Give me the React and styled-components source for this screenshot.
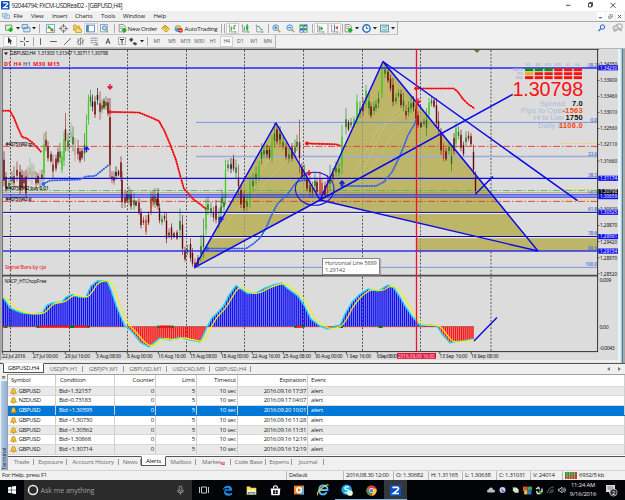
import React from "react";
import styled, { createGlobalStyle, css } from "styled-components";

const GlobalStyle = createGlobalStyle`
  * { box-sizing: border-box; }
  body { margin: 0; overflow: hidden; background: #f0f0f0; }
`;

const Window = styled.div`
  width: 625px;
  height: 500px;
  display: flex;
  flex-direction: column;
  background: #f0f0f0;
  color: #1c1c1c;
  font-family: "Open Sans", "Noto Sans", sans-serif;
  font-size: 6px;
  letter-spacing: -0.12px;
  white-space: nowrap;
  overflow: hidden;
`;

/* ---------- title and menu ---------- */
const TitleBar = styled.header`
  height: 11px;
  display: flex;
  align-items: center;
  background: #fff;
  padding-left: 1px;
`;
const Title = styled.span`
  flex: 1;
  padding-left: 2px;
  font-size: 6.2px;
  line-height: 10px;
  letter-spacing: -0.38px;
`;
const MenuBar = styled.nav`
  height: 11px;
  display: flex;
  align-items: center;
  padding-left: 2px;
  border-bottom: 1px solid #a9a9a9;
`;
const MenuItem = styled.span`
  width: ${(p) => p.$w}px;
`;
const Spacer = styled.span`
  flex: 1;
`;
const ChildButton = styled.span`
  width: 8px;
  height: 8px;
  margin-right: 1.5px;
  display: flex;
  align-items: center;
  justify-content: center;
  background: #fff;
`;

/* ---------- toolbars ---------- */
const ToolRow = styled.div`
  height: ${(p) => p.$h}px;
  display: flex;
  align-items: stretch;
`;
const ToolGroup = styled.div`
  display: flex;
  align-items: center;
  padding-left: 3px;
  border-right: 1px solid #b5b5b5;
  border-bottom: 1px solid #c4c4c4;
`;
const Slot = styled.span`
  width: ${(p) => p.$w}px;
  height: 11px;
  display: flex;
  align-items: center;
  justify-content: center;
  color: #555;
  font-size: 5.2px;
  letter-spacing: -0.2px;
  ${(p) =>
    p.$on &&
    css`
      background: #fafafa;
      border: 1px solid #d0d0d0;
    `}
`;
const ToolLabel = styled.span`
  width: ${(p) => p.$w}px;
  font-size: 6.1px;
  letter-spacing: -0.18px;
`;
const Sep = styled.i`
  width: 1px;
  height: 9px;
  margin: 0 ${(p) => p.$m || 1}px;
  background: #aaa;
`;

/* ---------- chart ---------- */
const ChartFrame = styled.main`
  position: relative;
  height: 315px;
`;
const ChartSvg = styled.svg`
  display: block;
`;
const Tooltip = styled.div`
  position: absolute;
  left: 322px;
  top: 210px;
  width: 58px;
  height: 17px;
  padding: 1px 2px;
  border: 1px solid #858585;
  background: #fff;
  box-shadow: 1px 1px 1px #8888;
  color: #555;
  font-size: 5.8px;
  line-height: 7px;
  letter-spacing: -0.2px;
`;

/* ---------- tabs ---------- */
const TabStrip = styled.div`
  height: ${(p) => p.$h}px;
  display: flex;
  align-items: flex-start;
  padding-left: ${(p) => p.$pad}px;
  border-top: 1px solid #555;
  color: #6c6c6c;
`;
const Tab = styled.span`
  width: ${(p) => p.$w}px;
  height: ${(p) => p.$h || 10}px;
  display: flex;
  align-items: center;
  justify-content: center;
  font-size: 6px;
  letter-spacing: ${(p) => p.$ls || -0.18}px;
  ${(p) =>
    p.$active
      ? css`
          margin-top: -1px;
          background: #fff;
          color: #111;
          border: 1px solid #555;
          border-top-color: #fff;
        `
      : css`
          background: linear-gradient(#999, #999) right center / 1px 6px no-repeat;
        `}
`;
const Badge = styled.sub`
  color: #f0202c;
  font-size: 4px;
  font-weight: 700;
  line-height: 1;
  margin-top: 4px;
`;
const Pager = styled.span`
  width: 22px;
  height: 9px;
  display: flex;
  align-items: center;
  justify-content: space-around;
`;

/* ---------- terminal ---------- */
const Terminal = styled.section`
  height: 96px;
  display: flex;
`;
const Rail = styled.div`
  width: 7px;
  display: flex;
  flex-direction: column;
  align-items: center;
`;
const RailClose = styled.span`
  height: 7px;
  font: 8px/6px "Open Sans", sans-serif;
`;
const RailTitle = styled.span`
  flex: 1;
  width: 6px;
  background: linear-gradient(90deg, #8fb0d6, #b9cfe8);
  writing-mode: vertical-rl;
  transform: rotate(180deg);
  line-height: 6px;
  font-size: 6px;
  letter-spacing: -0.3px;
`;
const TerminalBody = styled.div`
  flex: 1;
  display: flex;
  flex-direction: column;
  border-left: 1px solid #a0a0a0;
`;
const Table = styled.div`
  height: 82px;
  border-top: 1px solid #a0a0a0;
  background: #fff;
`;
const Row = styled.div`
  display: grid;
  grid-template-columns: 48px 59px 41px 41px 41px 70px 1fr;
  height: ${(p) => (p.$head ? 11.6 : 9.75)}px;
  line-height: ${(p) => (p.$head ? 11 : 9)}px;
  background: ${(p) => (p.$sel ? "#0078d7" : p.$even ? "#e9e9e9" : "#fff")};
  color: ${(p) => (p.$sel ? "#fff" : "#1c1c1c")};
  border-bottom: 1px solid ${(p) => (p.$sel ? "#0078d7" : "#d8d8d8")};
`;
const Cell = styled.span`
  display: flex;
  align-items: center;
  gap: 2px;
  justify-content: ${(p) => (p.$right ? "flex-end" : "flex-start")};
  padding: 0 ${(p) => (p.$right ? 1 : 0)}px 0 ${(p) => p.$pl || 3}px;
  border-right: 1px solid #cfcfcf;
  font-size: 6px;
  letter-spacing: ${(p) => p.$ls || -0.18}px;
`;

/* ---------- status and taskbar ---------- */
const StatusBar = styled.div`
  height: 10px;
  display: flex;
  align-items: center;
  padding-left: 0;
  border-top: 1px solid #d4d4d4;
`;
const Status = styled.span`
  width: ${(p) => p.$w}px;
  height: 9px;
  line-height: 9px;
  display: flex;
  align-items: center;
  gap: 2px;
  padding-left: 2px;
  font-size: 5.9px;
  letter-spacing: -0.24px;
  border-left: ${(p) => (p.$first ? 0 : 1)}px solid #b8b8b8;
`;
const Taskbar = styled.footer`
  height: 20px;
  display: flex;
  align-items: center;
  background: #020407;
  color: #eee;
`;
const Task = styled.span`
  width: ${(p) => p.$w}px;
  height: 20px;
  display: flex;
  align-items: center;
  justify-content: center;
  background: ${(p) => (p.$active ? "#34373b" : "transparent")};
  box-shadow: ${(p) => (p.$open ? "inset 0 -1px #76b9ed" : "none")};
`;
const Search = styled.span`
  width: 168px;
  height: 20px;
  display: flex;
  align-items: center;
  gap: 2px;
  padding: 0 7px 0 3px;
  background: #2b2b2c;
  color: #a0a0a0;
  font-size: 7.1px;
  letter-spacing: -0.05px;
`;
const Clock = styled.span`
  width: 30px;
  text-align: center;
  font-size: 5.8px;
  line-height: 8.6px;
`;

const Svg = ({ w = 9, h = 9, box = "0 0 16 16", children }) => (
  <svg width={w} height={h} viewBox={box} fill="none" strokeWidth="1.6">
    {children}
  </svg>
);
const Drop = () => (
  <svg width="4" height="3" viewBox="0 0 4 3">
    <path d="M0 0h4L2 2.5z" fill="#222" />
  </svg>
);
const ZLogo = ({ s = 9 }) => (
  <Svg w={s} h={s}>
    <rect width="16" height="16" rx="1" fill="#0c4ec4" />
    <path d="M3.5 3.5h7.5q3 1.5 0 4L5 12.3h8" stroke="#fff" strokeWidth="2.4" />
  </Svg>
);
const Plus = ({ x = 11, y = 11 }) => (
  <path d={`M${x - 4} ${y}h8M${x} ${y - 4}v8`} stroke="#14b414" strokeWidth="3.4" />
);
const Sheet = ({ color = "#888" }) => <path d="M2 1h8l3 3v10H2z" fill="#f7f7f7" stroke={color} />;
const BarsAxis = () => <path d="M3 1v13h12M1 3h2M13 13v3" stroke="#777" strokeWidth="1.2" />;

const icons = {
  newChart: (
    <Svg w={11}>
      <path d="M1 2h11v9H1z" fill="#e7f2e7" stroke="#4b9560" />
      <Plus x={10} y={10} />
    </Svg>
  ),
  profiles: (
    <Svg w={10}>
      <path d="M1 1h10v7H1zM4 6h11v8H4z" fill="#d5e8fa" stroke="#6794ba" />
    </Svg>
  ),
  market: (
    <Svg>
      <rect x="1" y="1" width="14" height="14" fill="#fff" stroke="#73a3c3" />
      <path d="M3 5h4v3H3z" fill="#28ae3a" />
      <path d="M8 8h5v5H8z" fill="#e35a35" />
      <path d="M4 3l9 10" stroke="#28ae3a" strokeWidth="2" />
    </Svg>
  ),
  target: (
    <Svg>
      <circle cx="8" cy="8" r="5" stroke="#777" />
      <path d="M8 0v6M8 10v6M0 8h6M10 8h6" stroke="#666" />
    </Svg>
  ),
  folders: (
    <Svg>
      <path d="M1 2h5l1 2h5v7H1z" fill="#f5d262" stroke="#c69c2c" />
      <path d="M5 7h4l1 2h5v6H5z" fill="#ffe27a" stroke="#c69c2c" />
    </Svg>
  ),
  nav: (
    <Svg>
      <rect x="1" y="2" width="14" height="12" fill="#fff" stroke="#4d86bb" />
      <path d="M1 2h4v12H1z" fill="#4d86bb" />
    </Svg>
  ),
  tester: (
    <Svg>
      <rect x="1" y="1" width="12" height="13" fill="#e6eff7" stroke="#7ba2c6" />
      <circle cx="8" cy="7" r="3.5" fill="#c3ddf4" stroke="#4b7fae" />
      <path d="M10 10l4 5" stroke="#c09b35" strokeWidth="2" />
    </Svg>
  ),
  order: (
    <Svg>
      <Sheet />
      <path d="M4 5h6M4 8h5" stroke="#999" />
      <Plus />
    </Svg>
  ),
  gold: (
    <Svg>
      <path d="M1 8l6-6 8 7-6 5z" fill="#f0b929" stroke="#b88515" />
      <path d="M2 8l6 4 6-3" stroke="#fff0a6" />
    </Svg>
  ),
  auto: (
    <Svg>
      <circle cx="7" cy="8" r="6" fill="#4aa0d5" />
      <path d="M1 7q6-9 12 0z" fill="#f1c544" />
      <circle cx="11.5" cy="11.5" r="4.2" fill="#dd2b20" />
      <path d="M10 11.5h3" stroke="#fff" />
    </Svg>
  ),
  bars: (
    <Svg>
      <BarsAxis />
      <path d="M6 5v7M6 6h2M11 2v8M9 8h2M11 3h3" stroke="#23a632" />
    </Svg>
  ),
  candle: (
    <Svg>
      <BarsAxis />
      <path d="M6 5v7M11 0v13" stroke="#23a632" />
      <path d="M9 3h4v7H9z" fill="#17bd2d" />
    </Svg>
  ),
  line: (
    <Svg>
      <BarsAxis />
      <path d="M4 5q4-3 5 2t5 3" stroke="#23a632" />
    </Svg>
  ),
  zoomIn: (
    <Svg>
      <circle cx="6.5" cy="6.5" r="5" fill="#d8ecff" stroke="#3d83c4" />
      <path d="M4 6.5h5M6.5 4v5" stroke="#2472bc" />
      <path d="M10.5 10.5l4 4" stroke="#d3a52e" strokeWidth="3" />
    </Svg>
  ),
  zoomOut: (
    <Svg>
      <circle cx="6.5" cy="6.5" r="5" fill="#d8ecff" stroke="#3d83c4" />
      <path d="M4 6.5h5" stroke="#2472bc" />
      <path d="M10.5 10.5l4 4" stroke="#d3a52e" strokeWidth="3" />
    </Svg>
  ),
  tile: (
    <Svg>
      <path d="M1 1h7v7H1zM8 8h7v7H8z" fill="#2fa63b" />
      <path d="M8 1h7v7H8zM1 8h7v7H1z" fill="#2e67ba" />
      <path d="M2.5 4h4v3h-4zM9.5 4h4v3h-4zM2.5 11h4v3h-4zM9.5 11h4v3h-4z" fill="#e4f1f7" />
    </Svg>
  ),
  scroll: (
    <Svg>
      <BarsAxis />
      <path d="M6 4v8" stroke="#777" />
      <path d="M8 4l5 4-5 4z" fill="#1ea430" />
    </Svg>
  ),
  shift: (
    <Svg>
      <BarsAxis />
      <path d="M8 1v12" stroke="#4674b5" />
      <path d="M14 3v7L9 6.5z" fill="#c44b32" />
    </Svg>
  ),
  clock: (
    <Svg>
      <circle cx="8" cy="8" r="6.5" fill="#f6fbff" stroke="#1d6fcb" strokeWidth="2.6" />
      <path d="M8 4v4h3" stroke="#555" />
    </Svg>
  ),
  template: (
    <Svg>
      <rect x="1" y="2" width="14" height="12" fill="#e1effb" stroke="#4d86bb" />
      <path d="M3 7l3-2 3 1 4-2M3 11l3-1 3 1 4-2" stroke="#45a35f" />
    </Svg>
  ),
  search: (
    <Svg w={8} h={8}>
      <circle cx="9" cy="6" r="4.4" fill="#dcecff" stroke="#2b69cf" strokeWidth="2" />
      <path d="M5.5 9.5L1 14" stroke="#2b69cf" strokeWidth="2.6" />
    </Svg>
  ),
  chat: (
    <Svg w={11}>
      <ellipse cx="11" cy="6" rx="6" ry="4.5" fill="#eee" stroke="#999" />
      <ellipse cx="5" cy="9" rx="5" ry="4" fill="#ddd" stroke="#999" />
      <path d="M13 10l2 4-5-3M3 12l-1 3 4-2" fill="#ddd" stroke="#999" />
    </Svg>
  ),
  cursor: (
    <Svg w={8} h={8}>
      <path d="M4 0v13l3-3 2 5 2-1-2-5h4z" fill="#333" />
    </Svg>
  ),
  cross: (
    <Svg>
      <path d="M8 0v6M8 10v6M0 8h6M10 8h6" stroke="#555" />
    </Svg>
  ),
  vline: <Svg><path d="M8 2v12" stroke="#555" /></Svg>,
  hline: <Svg><path d="M2 8h12" stroke="#555" /></Svg>,
  trend: <Svg><path d="M2 14L14 2" stroke="#555" /></Svg>,
  channel: (
    <Svg>
      <path d="M1 10L11 1M5 14L15 5M4 2v12M8 1v14M12 3v11" stroke="#666" strokeWidth="1.2" />
    </Svg>
  ),
  fib: (
    <Svg>
      <path d="M1 2h13M1 6h13M1 10h13M7 14h8" stroke="#777" strokeDasharray="2 .6" />
      <path d="M12 11v4" stroke="#777" />
    </Svg>
  ),
  textA: <Svg w={8} h={8}><path d="M4 14L8 3l4 11M5 10h6" stroke="#333" /></Svg>,
  textT: (
    <Svg w={8} h={8}>
      <rect x="1" y="1" width="14" height="14" stroke="#777" strokeDasharray="2 1" />
      <path d="M4 5h8M8 5v8" stroke="#333" strokeWidth="2" />
    </Svg>
  ),
  arrows: <Svg><path d="M0 5l4-4 4 4-4 4zM6 11l4-2 5 3-4 3z" fill="#444" /></Svg>,
};

const T1 = [
  ["newChart", 12], ["drop", 5], ["gap", 1], ["profiles", 10], ["drop", 5], ["sep", 7.5],
  ["market", 13], ["target", 14], ["folders", 13], ["nav", 14, 1], ["tester", 14], ["sep", 5],
  ["order", 11], ["New Order", 31], ["gold", 13], ["auto", 13], ["AutoTrading", 35], ["sep", 3], ["sep", 3],
  ["bars", 13, 1], ["candle", 14], ["line", 14], ["sep", 3], ["zoomIn", 14], ["zoomOut", 13], ["tile", 14],
  ["sep", 3], ["scroll", 14, 1], ["shift", 13, 1], ["sep", 3], ["order", 10], ["drop", 7],
  ["clock", 11], ["drop", 7], ["template", 11], ["drop", 7],
];
const T2 = [
  ["cursor", 14, 1], ["cross", 15], ["sep", 3], ["vline", 11], ["hline", 14], ["trend", 14], ["channel", 13],
  ["fib", 14], ["textA", 14], ["textT", 13], ["arrows", 11], ["drop", 6], ["sep", 4],
  ["M1", 16], ["M5", 13.7], ["M15", 13.7], ["M30", 13.7], ["H1", 13.7], ["H4", 13.7, 1], ["D1", 13.7],
  ["W1", 13.7], ["MN", 13.7],
];

function Tools({ items }) {
  return items.map(([k, w, on], i) => {
    if (k === "sep") return <Sep key={i} $m={(w - 1) / 2} />;
    if (k === "New Order" || k === "AutoTrading") return <ToolLabel key={i} $w={w}>{k}</ToolLabel>;
    return (
      <Slot key={i} $w={w} $on={on}>
        {k === "drop" ? <Drop /> : k === "gap" ? null : icons[k] || k}
      </Slot>
    );
  });
}

/* Bars: x, high, low (in thirds of a pixel below `base`), tone. */
const UPPER = [
  [4, 310, 415, "m"], [6, 372, 432, "m"], [9, 390, 425, "g"], [12, 370, 410, "g"], [14, 355, 425, "r"],
  [17, 340, 400, "r"], [20, 350, 440, "m"], [22, 365, 430, "m"], [24, 370, 420, "r"], [26, 365, 450, "m"],
  [28, 355, 400, "p"], [30, 330, 400, "q"], [32, 345, 410, "p"], [34, 350, 395, "q"], [36, 370, 420, "r"],
  [38, 375, 410, "m"], [40, 365, 440, "q"], [42, 365, 400, "r"], [44, 255, 400, "l"], [46, 250, 310, "r"],
  [48, 280, 340, "m"], [51, 310, 345, "m"], [53, 320, 390, "r"], [56, 320, 370, "m"], [58, 300, 350, "m"],
  [60, 285, 345, "g"], [62, 310, 375, "l"], [64, 250, 355, "l"], [65.5, 195, 310, "r"], [68, 255, 310, "g"],
  [71, 225, 285, "q"], [73, 235, 310, "g"], [75, 270, 340, "p"], [78, 275, 335, "r"], [80, 300, 345, "m"],
  [82, 300, 335, "m"], [84.5, 255, 340, "g"], [86.5, 200, 315, "l"], [88.5, 140, 230, "l"], [90.5, 125, 175, "g"],
  [92.5, 140, 190, "b"], [95, 145, 210, "m"], [97.5, 120, 170, "b"], [100, 130, 215, "r"], [102, 155, 195, "g"],
  [104, 150, 185, "m"], [106, 145, 185, "g"], [108, 150, 205, "m"], [110, 150, 390, "m"], [112, 370, 405, "r"],
  [114, 370, 410, "r"], [116, 355, 395, "b"], [118.5, 365, 385, "m"], [121, 325, 400, "m"], [122, 370, 480, "m"],
  [125, 425, 480, "r"], [127, 430, 465, "m"], [129, 415, 470, "g"], [131, 425, 485, "m"], [134, 435, 485, "g"],
  [151, 430, 480, "g"], [153, 425, 475, "r"], [155, 420, 480, "g"], [158, 420, 485, "m"],
  [222, 425, 480, "g"], [225.5, 335, 470, "l"], [228, 335, 370, "g"], [231, 330, 375, "b"], [233.5, 320, 370, "m"],
  [236, 335, 390, "g"], [238.5, 350, 440, "r"], [241, 410, 480, "m"], [244, 430, 490, "m"], [247, 440, 490, "g"],
  [250, 385, 480, "l"], [253, 375, 430, "g"], [256, 355, 410, "g"], [259, 340, 400, "l"], [261.5, 285, 350, "g"],
  [264, 290, 330, "g"], [267, 290, 330, "b"], [269.5, 295, 335, "m"], [272, 260, 345, "l"], [274.5, 225, 300, "g"],
  [277, 230, 290, "m"], [280, 235, 290, "b"], [283, 265, 305, "g"], [286, 285, 335, "m"], [289, 300, 345, "g"],
  [292, 285, 340, "m"], [295, 275, 330, "g"], [297, 260, 310, "g"], [299.5, 215, 375, "r"], [302, 345, 395, "m"],
  [304.5, 350, 400, "g"], [307, 380, 430, "m"], [310, 385, 450, "r"], [312.5, 400, 450, "g"], [315, 375, 430, "g"],
  [317, 390, 440, "m"], [320, 370, 455, "R"], [322, 390, 450, "R"], [325, 400, 450, "m"], [327.5, 380, 445, "R"],
  [330, 350, 430, "g"], [333, 360, 400, "r"], [336, 340, 385, "g"], [339, 345, 385, "g"], [342, 230, 380, "l"],
  [346, 180, 260, "g"], [348.5, 215, 250, "m"], [351, 210, 240, "g"], [354, 205, 240, "l"], [357, 140, 230, "l"],
  [360, 160, 210, "g"], [363, 150, 205, "r"], [366, 110, 180, "l"], [369, 130, 200, "g"], [371, 165, 210, "m"],
  [374, 160, 200, "g"], [376, 155, 190, "g"], [378.5, 130, 180, "g"], [382, 50, 150, "l"], [385, 45, 90, "g"],
  [388, 60, 105, "m"], [390.5, 80, 130, "m"], [393, 90, 175, "m"], [396, 135, 170, "g"], [398.5, 125, 150, "g"],
  [401, 125, 180, "m"], [403.5, 135, 190, "g"], [406, 170, 215, "r"], [408.5, 160, 205, "g"], [411, 145, 195, "g"],
  [413.5, 145, 190, "b"], [416, 170, 220, "m"], [418, 190, 240, "m"], [421, 220, 240, "m"], [424, 210, 235, "g"],
  [426.5, 180, 265, "g"], [429, 150, 210, "l"], [431.5, 145, 175, "g"], [434, 150, 180, "m"], [436.5, 150, 240, "m"],
  [438.5, 190, 260, "r"], [441, 240, 320, "m"], [443.5, 285, 340, "R"], [446, 300, 340, "m"], [449, 280, 320, "g"],
  [451.5, 290, 370, "g"], [454, 255, 320, "m"], [456, 220, 300, "l"], [458.5, 235, 275, "g"], [461, 245, 310, "m"],
  [463.5, 280, 325, "m"], [466, 250, 295, "g"], [468.5, 250, 280, "r"], [471, 255, 295, "m"], [473.5, 290, 380, "m"],
  [475.5, 370, 440, "m"],
];
const LOWER = [
  [136, 15, 35, "m"], [139, 10, 60, "m"], [141, 40, 100, "m"], [143.5, 65, 90, "r"], [146, 60, 120, "R"],
  [148.5, 50, 90, "m"], [151, 5, 60, "R"], [154, 0, 30, "R"], [157, 5, 35, "m"], [159.5, 25, 85, "m"],
  [162, 60, 90, "g"], [164.5, 50, 80, "r"], [166.5, 55, 145, "m"], [169, 100, 130, "r"], [171.5, 85, 135, "m"],
  [174, 110, 130, "m"], [177, 105, 135, "m"], [180, 40, 130, "g"], [182.5, 60, 180, "m"], [185, 155, 200, "m"],
  [187.5, 150, 180, "g"], [190.5, 130, 200, "m"], [192.5, 160, 215, "m"], [195, 190, 222, "r"], [198, 180, 215, "m"],
  [201, 120, 200, "g"], [203.5, 70, 190, "g"], [206, 10, 120, "l"], [208, 5, 60, "g"], [211, 20, 65, "g"],
  [213.5, 35, 80, "r"], [216, 15, 85, "m"], [219, 40, 100, "g"], [221, 10, 70, "g"], [224, 0, 50, "g"],
];
const TONES = {
  m: ["#8a2020", "#6a0606"], r: ["#9a3a32", "#7a1010"], R: ["#c03a2a", "#c8412e"], p: ["#b88", "#c99"],
  q: ["#8b8", "#9dbb8a"], g: ["#2f8f22", "#2b6e18"], l: ["#1fb81f", "#45cc1c"], b: ["#222", "#111"],
};
const Candles = ({ data, base }) =>
  data.map(([x, hi, lo, tone], i) => {
    const y1 = base + hi / 3;
    const h = (lo - hi) / 3;
    const full = tone === "m" || tone === "l" || tone === "R";
    const frac = full ? 0.6 : 0.3;
    return (
      <g key={i}>
        <rect x={x - 0.35} y={y1} width="0.7" height={h} fill={TONES[tone][0]} />
        <rect x={x - 0.7} y={y1 + h * (1 - frac) * 0.6} width="1.4" height={h * frac} fill={TONES[tone][1]} />
      </g>
    );
  });

const WAVE = [
  [3, 297.5], [7, 303], [10, 308], [17, 311], [23, 313], [33, 314], [42, 313], [47, 305], [52, 303], [62, 302],
  [66, 297], [72, 294.5], [79, 297], [86, 297], [91, 286], [97, 281], [107, 280.5], [111, 290], [116, 305],
  [120, 315], [125, 326], [128, 328], [133, 333], [141, 343], [149, 347], [154, 343], [160, 338], [170, 340],
  [180, 337.5], [190, 340], [200, 342], [204, 334], [207, 327], [212, 318], [219, 311], [224, 305], [229, 295],
  [236, 285.5], [241, 289], [248, 293.5], [256, 293], [265, 288], [273, 285], [282, 283], [287, 288], [298, 296],
  [304, 305], [311, 319], [320, 326], [327, 329], [333, 328], [340, 325], [345, 314], [352, 302], [360, 294],
  [368, 289], [378, 291], [388, 285], [394, 288], [400, 297], [405, 306], [412, 316], [420, 325.5], [430, 325],
  [437, 326], [442, 334], [450, 343], [456, 341.5], [463, 341], [473, 339],
];
const ZERO = 326.7;
const waveAt = (x) => {
  if (x <= WAVE[0][0]) return WAVE[0][1];
  for (let i = 1; i < WAVE.length; i++) {
    const [x0, y0] = WAVE[i - 1];
    const [x1, y1] = WAVE[i];
    if (x <= x1) return y0 + ((x - x0) / (x1 - x0)) * (y1 - y0);
  }
  return WAVE[WAVE.length - 1][1];
};
const barXs = Array.from({ length: 241 }, (_, i) => 3.3 + i * 1.957).filter((x) => x < 474);
const signal = barXs
  .map((x) => `${x.toFixed(1)},${((waveAt(x - 1) + waveAt(x - 4) + waveAt(x - 7)) / 3).toFixed(1)}`)
  .join(" ");

const RED_TRAILS = [
  "3,110.7 10,110.7 14,118 18,128 22,137 27,138.5 33,143 41,151.7",
  "110,112 139,112.5 150,117 159,121 164,130 170,144 176,160 180,175 184,189 188,193 193,199 200,204 206,209",
  "307,143.5 336,144.3 341,146",
  "416,88.5 454,88.5 458,92 463,99 468,104 475,108.7",
];
const BLUE_TRAILS = [
  "43,184 50,180.5 80,179.5 86,176.5 95,176 108,165.5",
  "207,248.5 246,248.5 253,244 260,238 266,228 272,214 278,203 287,195 295,184 299,181 306,180",
  "342,186 376,186 384,182 392,172 400,156 408,135 414,125 416,120",
];
const PRICES = [
  [64, "1.34350"], [80.5, "1.33900"], [96.5, "1.33460"], [112.5, "1.33010"], [128.5, "1.32560"], [144.5, "1.32110"],
  [161, "1.31660"], [209, "1.30320"], [225.5, "1.29870"], [241.7, "1.29420"], [257.8, "1.28970"], [273.8, "1.28520"],
];
const TAGS = [
  [67.7, "1.34230"], [178.2, "1.31174"], [191.6, "1.30798", "#111"], [196.5, "1.30659"], [212.2, "1.30325"],
  [236.5, "1.29561"], [251, "1.29154"],
];
const LEVELS = [
  [66.7, "-38.2"], [121.7, "0.0"], [156, "23.6"], [177, "38.2"], [194.5, "50.0"], [211.4, "61.8"], [235, "78.6"],
  [249.8, "88.6"], [266.4, "100.0"],
];
const DATES = [
  [2.3, "22 Jul 2016", 23], [33, "27 Jul 00:00", 25], [65, "29 Jul 16:00", 25], [96, "3 Aug 08:00", 25],
  [127, "8 Aug 00:00", 25.5], [158, "10 Aug 16:00", 28], [190, "15 Aug 08:00", 27], [221, "18 Aug 00:00", 27.5],
  [252, "22 Aug 16:00", 28], [283, "25 Aug 08:00", 28], [315, "30 Aug 00:00", 27.5], [346, "1 Sep 16:00", 25],
  [377, "6 Sep 08:00", 20], [439.5, "13 Sep 16:00", 28], [471, "16 Sep 08:00", 27.5],
];
const ORDERS = [[145.5, "#40751992 tp", 27], [190, "#40751992 buy 0.01", 43], [200.5, "#40751992 sl", 26]];
const STATS = [
  ["Spread", 540, 25, "7.0", 10.5, "#111", 105.5], ["Pips to Open", 521, 45, "-1563", 20, "#ff4500", 112.8],
  ["Hi to Low", 533.5, 30, "1750", 17, "#111", 120.3], ["Daily Av", 538, 28, "1106.0", 23.5, "#ff4500", 127.8],
];
const SIGNALS = ["gggrrr", "orrrrr", "rrrrrr"];
const SIGNAL_FILL = { g: "#108a18", r: "#f51212", o: "#f8a41a" };

const Arrow = ({ x, y, down, color }) => (
  <path
    transform={`translate(${x} ${y}) scale(1 ${down ? -1 : 1})`}
    d="M0-3L3 .2 1.8 1.2.7.2V3H-.7V.2L-1.8 1.2-3 .2z"
    fill={color}
  />
);

function Chart() {
  return (
    <ChartFrame>
      <ChartSvg width="625" height="315" viewBox="0 48 625 315" fontFamily="'Noto Sans', sans-serif" fontSize="5.2">
        <rect y="48" width="625" height="315" fill="#dcdcdc" />
        <path d="M0 48h625" stroke="#8c8c8c" strokeWidth="1" />
        <path d="M2 49.5h597" stroke="#505050" strokeWidth="1.2" />
        <rect y="48" width="1.4" height="315" fill="#a5a5a5" />
        <path d="M2.3 49v303" stroke="#555" strokeWidth="1" />
        <path d="M10.5 50v301M69.5 50v301M127.5 50v301M186.5 50v301M244.5 50v301M303.5 50v301M362.5 50v301M420.5 50v301M491 50v301"
          stroke="#555" strokeWidth="1" strokeDasharray="2 1.6" />

        <g fill="#bdb669">
          <path d="M194.3 267.7L276 123l44 77z" />
          <path d="M320 200L383 61.5 538 251z" />
          <path d="M417 237h180v14H417z" />
        </g>
        <g stroke="#dedbb8" strokeWidth="0.5" strokeDasharray="1.5 1.5" fill="none">
          <path d="M222 229L245 200 268 160 290 155M244 205L286 162M350 180L378 130 400 108M360 175L385 125 416 105M365 180L392 135 416 118" />
        </g>
        <g stroke="#888" strokeWidth="0.8" strokeDasharray="2 1.6">
          <path d="M244.5 180v68M303.5 172v35M362.5 110v100M420.5 108v143" />
        </g>

        <g fill="none">
          <path d="M3 213.5h595M3 237.7h595" stroke="#f1efc8" strokeWidth="1" />
          <path d="M196 122.4h402M196 267.4h402" stroke="#6486dc" strokeWidth="0.8" />
          <path d="M196 156.6h402" stroke="#9dacdd" strokeWidth="1.5" />
          <path d="M3 146.4h595M3 201.4h595" stroke="#f23636" strokeWidth="0.9" strokeDasharray="7 2 1.5 2" />
          <path d="M3 190.5h595" stroke="#47b847" strokeWidth="0.8" strokeDasharray="7 2 1.5 2" />
          <path d="M3 192.7h595" stroke="#8e9489" strokeWidth="0.7" />
          <path d="M560 143.5h38M560 189.5h38M560 200h38" stroke="#e8d13a" strokeWidth="0.7" strokeDasharray="2 1" />
        </g>

        <Candles data={UPPER} base={48} />
        <Candles data={LOWER} base={195} />

        <g fill="none">
          <path d="M3 68h595" stroke="#2828ee" strokeWidth="1.4" />
          <path d="M3 178.4h595" stroke="#0808ee" strokeWidth="1.3" />
          <path d="M3 194.9h595M3 197.1h595" stroke="#1414e8" strokeWidth="1" />
          <path d="M3 212.4h595M3 236.5h595" stroke="#0505c8" strokeWidth="1" />
          <path d="M3 251h595" stroke="#3030e8" strokeWidth="1.5" />
          {RED_TRAILS.map((p) => (
            <g key={p}>
              <polyline points={p} stroke="#f01414" strokeWidth="0.9" />
              <polyline points={p} stroke="#f80808" strokeWidth="2.1" strokeLinecap="round" strokeDasharray="0.1 2.4" />
            </g>
          ))}
          {BLUE_TRAILS.map((p) => (
            <g key={p}>
              <polyline points={p} stroke="#4a74e0" strokeWidth="0.8" />
              <polyline points={p} stroke="#3566e8" strokeWidth="2" strokeLinecap="round" strokeDasharray="0.1 2.4" />
            </g>
          ))}
          <g fill="#f40d0d"><circle cx="110" cy="112" r="1.8" /><circle cx="307" cy="143.3" r="1.9" /><circle cx="416" cy="88.5" r="1.8" /></g>
          <g fill="#2f62e8"><circle cx="43.3" cy="184" r="1.9" /><circle cx="207" cy="248.5" r="1.9" /><circle cx="342" cy="185.5" r="1.9" /></g>
          <path d="M194.3 267.7L276 123l44 77L383 61.5 538 251M194.3 267.7L320 200M320 200L512.7 94.4M383 61.5L577.5 200.7M475.5 194L493 176.5"
            stroke="#0a0ae8" strokeWidth="1.5" strokeLinejoin="round" />
          <path d="M538 251L320 200" stroke="#0a0ae8" strokeWidth="1.3" />
          <ellipse cx="314.7" cy="188.8" rx="19.3" ry="16.5" stroke="#1414e8" strokeWidth="1.1" />
        </g>
        <Arrow x={86.5} y={149} color="#1a1af0" />
        <Arrow x={221} y={219} color="#1a1af0" />
        <Arrow x={342} y={183} color="#1a1ac8" />
        <Arrow x={110} y={87} down color="#e0143c" />
        <Arrow x={309} y={173} down color="#e0143c" />
        <Arrow x={418} y={101.5} down color="#e0143c" />
        <path d="M474 50h6l-3 3z" fill="#77751d" />

        <path d="M4 52.5h4l-2 2.4z" fill="#111" />
        <text x="10" y="55.4" textLength="98" fontSize="5" fill="#111">GBPUSD,H4&#160; 1.31303 1.31347 1.30711 1.30798</text>
        <g fontSize="5.6" fontWeight="700" fill="#f01010">
          <text x="4" y="65.6" textLength="7">D1</text>
          <text x="13.5" y="65.6" textLength="7.5">H4</text>
          <text x="23" y="65.6" textLength="7.5" fill="#666">H1</text>
          <text x="33" y="65.6" textLength="12">M30</text>
          <text x="47.5" y="65.6" textLength="12">M15</text>
        </g>
        {ORDERS.map(([y, t, w]) => (
          <text key={t} x="5.5" y={y} fontSize="4.8" fontWeight="500" textLength={w} fill="#000">{t}</text>
        ))}
        <text x="5" y="268.9" fontSize="5.6" textLength="41" fill="#f01414">Signal Bars by cja</text>
        {LEVELS.map(([y, t]) => (
          <text key={t} x="597" y={y} fontSize="4.8" fontWeight="600" textAnchor="end" fill="#5a7ad4">{t}</text>
        ))}

        <g fontSize="3.4" fontWeight="600" fill="#a9bad3">
          {["M1", "M5", "M15", "M30", "H1", "H4"].map((t, i) => (
            <text key={t} x={528 + i * 9.9} y="65.6" textAnchor="middle">{t}</text>
          ))}
          <text x="522.5" y="71.2" textAnchor="end">MACD</text>
          <text x="522.5" y="75.2" textAnchor="end">STR</text>
          <text x="522.5" y="79.2" textAnchor="end">EMA</text>
        </g>
        {SIGNALS.map((row, r) =>
          [...row].map((c, i) => (
            <rect key={r + "-" + i} x={525 + i * 9.75} y={68.3 + r * 3.95} width="8.2" height="2.9" fill={SIGNAL_FILL[c]} />
          )),
        )}
        <g fontFamily="'Liberation Sans', Arial, sans-serif">
          <text x="512.5" y="95.8" fontSize="20" textLength="70.5" lengthAdjust="spacingAndGlyphs" fill="#fa1010">1.30798</text>
          {STATS.map(([t, x, w, v, vw, c, y]) => (
            <g key={t} fontSize="7.5">
              <text x={x} y={y} textLength={w} fill="#a9bdda">{t}</text>
              <text x={582.5 - vw} y={y} textLength={vw} fontWeight="700" fill={c}>{v}</text>
            </g>
          ))}
        </g>

        <path d="M2 275.7h596" stroke="#4c4c4c" strokeWidth="1.8" />
        <text x="4.5" y="282.6" fontSize="5" textLength="42" fill="#222">NRCP_HTChopFree</text>
        {barXs.map((x) => {
          const y = waveAt(x);
          return (
            <rect key={x} x={x - 0.75} width="1.5" y={Math.min(y, ZERO)} height={Math.abs(y - ZERO)} fill={y < ZERO ? "#1010f4" : "#fa1414"} />
          );
        })}
        <path d={`M3 ${ZERO}h471`} stroke="#b93434" strokeWidth="0.8" />
        <path d="M3 326.7h3M38 326.7h50M160 326.7h11M296 326.7h6M337 326.7h4" stroke="#f01010" strokeWidth="2.2" />
        <path d="M5 326.7h2.5M36.5 326.7h2.5M70 326.7h4M87.5 326.7h2M157.5 326.7h2M171.5 326.7h2M294.5 326.7h2M302.5 326.7h2M335 326.7h2.5M341 326.7h2M378.5 326.7h4" stroke="#087708" strokeWidth="2.6" />
        <polyline points={WAVE.join(" ")} fill="none" stroke="#20dcec" strokeWidth="1.4" />
        <polyline points={signal} fill="none" stroke="#f8ee10" strokeWidth="1.2" />
        <path d="M474 341l23-23.5" stroke="#0a0ae0" strokeWidth="1.4" />

        <path d="M416.5 49v303" stroke="#ee1230" strokeWidth="1.3" />
        <path d="M597.6 49v303M2 351.6h596" stroke="#333" strokeWidth="1" fill="none" />
        <g fill="#111">
          {PRICES.map(([y, t]) => (
            <g key={t}>
              <path d={`M598 ${y}h1.5`} stroke="#333" strokeWidth="0.7" />
              <text x="600" y={y + 1.8} fontSize="4.8" textLength="17">{t}</text>
            </g>
          ))}
          <text x="599.5" y="282" textLength="11.5">0.009</text>
          <text x="599.5" y="328.8" textLength="9">0.00</text>
          <text x="599.5" y="350" textLength="15">-0.0043</text>
          {TAGS.map(([y, t, fill]) => (
            <g key={t}>
              <rect x="598.3" y={y - 2.5} width="19.7" height="5.2" fill={fill || "#1212f0"} />
              <text x="600" y={y + 1.8} fontSize="4.8" textLength="17" fill="#e6e6ff">{t}</text>
            </g>
          ))}
          {DATES.map(([x, t, w]) => (
            <g key={t}>
              <path d={`M${x + 0.3} 352v2`} stroke="#333" strokeWidth="0.8" />
              <text x={x} y="357.7" fontSize="4.9" textLength={w}>{t}</text>
            </g>
          ))}
        </g>
        <rect x="397" y="353" width="39" height="5.8" fill="#dc1438" />
        <text x="398" y="357.7" fontSize="4.9" textLength="36.5" fill="#ffdfe4">2016.09.09 16:00</text>

        <rect x="618.3" y="49" width="2.4" height="314" fill="#eef6fb" />
        <rect x="620.7" y="49" width="1.6" height="314" fill="#9fd0e2" />
        <rect x="622.3" y="49" width="0.9" height="314" fill="#1c5868" />
        <rect x="623.2" y="49" width="1.8" height="314" fill="#a5a5a5" />
        <rect y="360.3" width="618" height="2" fill="#f2f2f2" />
      </ChartSvg>
      <Tooltip>
        Horizontal Line 5889
        <br />
        1.29142
      </Tooltip>
    </ChartFrame>
  );
}

const Bell = () => (
  <Svg w={7} h={7}>
    <path d="M1 12q3-2 3-6 0-5 4-5t4 5q0 4 3 6z" fill="#f6c52d" stroke="#b9861b" />
    <circle cx="8" cy="13.6" r="1.7" fill="#bd861c" />
  </Svg>
);
const ALERTS = [
  ["GBPUSD", "Bid>1.32157", "2016.09.16 17:37"],
  ["NZDUSD", "Bid>0.73183", "2016.09.17 04:07"],
  ["GBPUSD", "Bid <1.30595", "2016.09.20 10:01"],
  ["GBPUSD", "Bid <1.30730", "2016.09.16 11:28"],
  ["GBPUSD", "Bid <1.30562", "2016.09.16 11:31"],
  ["GBPUSD", "Bid>1.30868", "2016.09.16 12:19"],
  ["GBPUSD", "Bid <1.30714", "2016.09.16 12:19"],
];
const MENU = [["File", 17.5], ["View", 21], ["Insert", 23], ["Charts", 26], ["Tools", 22], ["Window", 30.5], ["Help", 20]];
const CHART_TABS = [["GBPUSD,H4", 41, 1], ["USDJPY,H1", 39], ["GBPJPY,M1", 41], ["GBPUSD,M1", 43], ["USDCAD,M5", 43], ["GBPUSD,H4", 41]];
const TERM_TABS = [["Trade", 25], ["Exposure", 33], ["Account History", 52], ["News", 22], ["Alerts", 25, 1], ["Mailbox", 30], ["Market", 35], ["Code Base", 35], ["Experts", 26], ["Journal", 32]];

export default function App() {
  return (
    <Window>
      <GlobalStyle />
      <TitleBar>
        <ZLogo s={8.5} />
        <Title>92044794: FXCM-USDReal02 - [GBPUSD,H4]</Title>
        <svg width="60" height="11" fill="none" stroke="#222" strokeWidth="0.8">
          <path d="M1 5.3h4.5M23.5 3.5h3v3.5h-3zM24.5 3.5v-1h3v3.6h-1M45.5 2.8l5 5M50.5 2.8l-5 5" />
        </svg>
      </TitleBar>
      <MenuBar>
        <Svg w={8} h={8}>
          <path d="M1 3h9v7H1zM5 6h10v7H5z" fill="#d8ebfa" stroke="#84aed0" />
        </Svg>
        <MenuItem $w={3.5} />
        {MENU.map(([t, w]) => (
          <MenuItem key={t} $w={w}>{t}</MenuItem>
        ))}
        <Spacer />
        <ChildButton><Svg w={5} h={5}><path d="M3 12h10" stroke="#334" strokeWidth="3" /></Svg></ChildButton>
        <ChildButton><Svg w={5} h={5}><path d="M2 7h8v7H2zM6 6V2h8v8h-3" stroke="#567" strokeWidth="2" /></Svg></ChildButton>
        <ChildButton><Svg w={5} h={5}><path d="M3 3l10 10M13 3L3 13" stroke="#456" strokeWidth="3" /></Svg></ChildButton>
      </MenuBar>
      <ToolRow $h={13}>
        <ToolGroup>
          <Tools items={T1} />
        </ToolGroup>
        <Spacer />
        <Slot $w={14}>{icons.search}</Slot>
        <Slot $w={16}>{icons.chat}</Slot>
      </ToolRow>
      <ToolRow $h={13}>
        <ToolGroup>
          <Tools items={T2} />
        </ToolGroup>
      </ToolRow>
      <Chart />
      <TabStrip $h={11} $pad={3}>
        {CHART_TABS.map(([t, w, a], i) => (
          <Tab key={i} $w={w} $active={a} $ls={-0.22}>{t}</Tab>
        ))}
        <Spacer />
        <Pager>
          <svg width="3" height="4"><path d="M3 0v4L0 2z" fill="#777" /></svg>
          <svg width="3" height="4"><path d="M0 0v4l3-2z" fill="#777" /></svg>
        </Pager>
      </TabStrip>
      <Terminal>
        <Rail>
          <RailClose>×</RailClose>
          <RailTitle>Terminal</RailTitle>
        </Rail>
        <TerminalBody>
          <Table>
            <Row $head>
              <Cell>Symbol</Cell>
              <Cell $pl={4}>Condition</Cell>
              <Cell $right>Counter</Cell>
              <Cell $right>Limit</Cell>
              <Cell $right>Timeout</Cell>
              <Cell $right>Expiration</Cell>
              <Cell>Event</Cell>
            </Row>
            {ALERTS.map(([s, c, e], i) => (
              <Row key={i} $even={i % 2 === 0} $sel={i === 2}>
                <Cell $ls={-0.36} $pl={1.5}><Bell />{s}</Cell>
                <Cell $ls={-0.25}>{c}</Cell>
                <Cell $right>0</Cell>
                <Cell $right>5</Cell>
                <Cell $right>10 sec</Cell>
                <Cell $right $ls={-0.32}>{e}</Cell>
                <Cell>alert</Cell>
              </Row>
            ))}
          </Table>
          <TabStrip $h={13} $pad={1}>
            {TERM_TABS.map(([t, w, a]) => (
              <Tab key={t} $w={w} $active={a}>
                {t}
                {t === "Market" && <Badge>92</Badge>}
              </Tab>
            ))}
          </TabStrip>
        </TerminalBody>
      </Terminal>
      <StatusBar>
        <Status $first $w={286}>For Help, press F1</Status>
        <Status $w={57}>Default</Status>
        <Status $w={50}>2016.08.30 12:00</Status>
        <Status $w={35}>O: 1.30682</Status>
        <Status $w={34}>H: 1.31165</Status>
        <Status $w={34}>L: 1.30638</Status>
        <Status $w={34}>C: 1.31031</Status>
        <Status $w={32}>V: 24014</Status>
        <Status $w={56}>
          <svg width="12" height="7">
            <path d="M0 0h12v7H0z" fill="#3f8f2f" />
            <path d="M0 5h2V4h2v1h2V2h2v2h2V0h2v7H0z" fill="#b8452e" />
            <path d="M2 0v7M4.500 0v7M7 0v7M9.500 0v7" stroke="#d9dcc0" strokeWidth=".5" />
          </svg>
          6932/5 kb
        </Status>
      </StatusBar>
      <Taskbar>
        <Task $w={23.5}>
          <svg width="8" height="8" fill="#fff"><path d="M0 1.200l3.500-.5v3H0zM4 .6L8 0v3.700H4zM0 4.200h3.500v3L0 6.700zM4 4.200h4V8l-4-.6z" /></svg>
        </Task>
        <Search>
          <svg width="12" height="12"><circle cx="6" cy="6" r="4.500" fill="none" stroke="#f2f2f2" strokeWidth="1.500" /></svg>
          Ask me anything
          <Spacer />
          <Svg w={9} h={10}><rect x="5.500" y="1" width="5" height="9" rx="2.500" stroke="#aaa" /><path d="M3 8q0 5 5 5t5-5M8 13v3" stroke="#aaa" /></Svg>
        </Search>
        <Task $w={24}>
          <svg width="10" height="8" fill="none" stroke="#ddd" strokeWidth=".9"><path d="M2.500 1h5v6h-5zM.5 1v6M9.500 1v6" /></svg>
        </Task>
        <Task $w={24}>
          <Svg w={11} h={11}><path d="M1 8q1-7 7.500-7T15 8.500H5q.5 4 4.500 4 3 0 5-1.300v3Q12 16 9 15.700 3 15 3 10q0-4 4-5.500Q3 4.500 1 8zm4.500-1.800h5.200Q10.500 4 8.300 4 6 4 5.500 6.200z" fill="#1b8ce8" /></Svg>
        </Task>
        <Task $w={24}>
          <Svg w={11} h={11}><path d="M1 2h5l1 2h8v10H1z" fill="#ffd85e" /><path d="M2 7h12v3H2z" fill="#fff3bb" /><path d="M3 10h10v4h-2v-2H5v2H3z" fill="#3a9ae0" /></Svg>
        </Task>
        <Task $w={24}>
          <Svg w={11} h={11}><path d="M1 5h14l-1 10H2z" fill="#fff" /><path d="M5 5q0-4 3-4t3 4" stroke="#fff" /><path d="M4.500 7.500h3v2.500h-3zM8.300 7.500h3v2.500h-3zM4.500 10.700h3v2.500h-3zM8.300 10.700h3v2.500h-3z" fill="#111" /></Svg>
        </Task>
        <Task $w={23}>
          <Svg w={10} h={10}><rect y="1" width="16" height="14" fill="#f28a20" /><path d="M16 1v14H9z" fill="#58aee4" /><circle cx="8" cy="8" r="5" fill="#fff" /><path d="M6.500 5v6l5-3z" fill="#e66915" /></Svg>
        </Task>
        <Task $w={24}>
          <Svg w={12} h={12}><path d="M13 11q-2 3-5 3-5 0-5-6t5-6q6 0 6 6H4" stroke="#4fbdf3" strokeWidth="2.600" /><path d="M1 15Q-1 11 7 5t8-3" stroke="#f4cb3f" strokeWidth="1.500" /></Svg>
        </Task>
        <Task $w={25} $open>
          <Svg w={12} h={12}><circle cx="7.500" cy="7.500" r="7" fill="#10a8ec" /><path d="M10.500 4.500Q8 2.500 5.500 4.500 4.500 7 7.500 7.500q3.500.6 3 3-2 2.600-5.500.5" stroke="#fff" strokeWidth="1.700" /><circle cx="12" cy="12" r="3.800" fill="#e9f7d9" /></Svg>
        </Task>
        <Task $w={24} $open>
          <Svg w={11} h={11}><circle cx="8" cy="8" r="7.500" fill="#e0402f" /><path d="M1.500 4.500L8 15.500A7.500 7.500 0 0 1 1.500 4.500z" fill="#2da94f" /><path d="M15 5.500A7.500 7.500 0 0 1 8 15.500L11 8 9 5.500z" fill="#fcc934" /><circle cx="8" cy="8" r="3.600" fill="#fff" /><circle cx="8" cy="8" r="2.700" fill="#4285f4" /></Svg>
        </Task>
        <Task $w={23} $open $active><ZLogo s={11} /></Task>
        <Spacer />
        <Task $w={12}><Svg w={8} h={8}><path d="M3 13a3 3 0 0 1 0-6q1-4 5-4t4 4q4 0 4 3t-3 3z" fill="#b9bbbf" /></Svg></Task>
        <Task $w={12}><Svg w={8} h={8}><circle cx="7" cy="8" r="6" fill="#c7cbe4" /><path d="M4 5l7 6-4 2z" fill="#3d5bc0" /></Svg></Task>
        <Task $w={12}><Svg w={7} h={8}><path d="M2 2h8l5 5v7H7L2 9z" fill="#e4f2cb" /><path d="M2 2l9 10" stroke="#7cc243" /></Svg></Task>
        <Task $w={12}><Svg w={9} h={9}><path d="M0 1h8v8H0z" fill="#e5542c" /><path d="M8 1h8v7H8z" fill="#3aa655" /><path d="M2 8h6v7H2z" fill="#e9c52e" /><path d="M8 8h7v7H8z" fill="#2f78cf" /></Svg></Task>
        <Task $w={12}><Svg w={8} h={9}><path d="M2 5l5-3 2 4M14 4v6h-5M3 9l2 5h6" stroke="#eee" strokeWidth="2.600" /><circle cx="11" cy="12" r="3" fill="#39b54a" /></Svg></Task>
        <Task $w={11}><Svg w={7} h={8}><path d="M1 15Q3 3 15 1M6 15q1-7 9-8M10 15q1-4 5-4" stroke="#999" /></Svg></Task>
        <Task $w={12}><Svg w={8} h={8}><path d="M1 6h3l4-4v12l-4-4H1z" stroke="#ddd" /><path d="M11 5q2 3 0 6M13 3q4 5 0 10" stroke="#ddd" /></Svg></Task>
        <Clock>
          11:24 AM
          <br />
          9/16/2016
        </Clock>
        <Task $w={27}>
          <svg width="13" height="13">
            <path d="M1 1h9v7H6L4 10V8H1z" fill="#ddd" />
            <path d="M2.500 3h6M2.500 5h6" stroke="#555" strokeWidth=".7" />
            <circle cx="8.500" cy="8.500" r="3.600" fill="#333" stroke="#ccc" strokeWidth=".7" />
            <text x="8.500" y="10.500" fontSize="5.500" textAnchor="middle" fill="#fff">2</text>
          </svg>
        </Task>
      </Taskbar>
    </Window>
  );
}
